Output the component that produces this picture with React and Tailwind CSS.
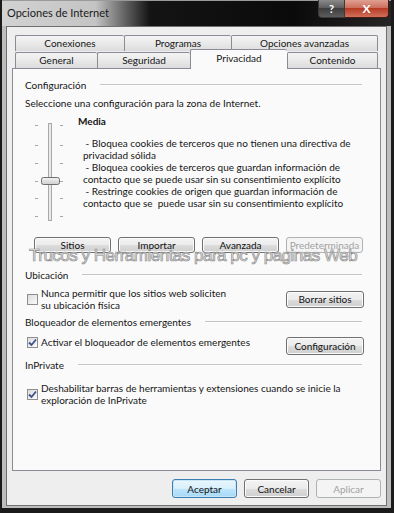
import React from 'react';

const Btn = ({ children, disabled, primary, className = '' }) => {
  let look =
    'border-[#707070] bg-[linear-gradient(#f3f3f3,#ebebeb_50%,#dddddd_50%,#cfcfcf)] text-[#111] shadow-[inset_0_0_0_1px_#fbfbfb]';
  if (primary)
    look =
      'border-[#3c7fb1] bg-[linear-gradient(#eaf6fd,#d9f0fc_50%,#bee6fd_50%,#a7d9f5)] text-[#111] shadow-[inset_0_0_0_1px_#c9e6f8]';
  if (disabled) look = 'border-[#adb2b5] bg-[#f4f4f4] text-[#a2a2a2]';
  return (
    <div className={`flex items-center justify-center rounded-[3px] border leading-none ${look} ${className}`}>
      {children}
    </div>
  );
};

const Check = ({ checked }) => (
  <div className="w-[11px] h-[11px] shrink-0 border border-[#8e8f8f] bg-[linear-gradient(135deg,#dcdcdc,#fbfbfb)] flex items-center justify-center">
    {checked && (
      <svg width="9" height="9" viewBox="0 0 9 9">
        <path d="M1 4.5 L3.5 7 L8 1.5" fill="none" stroke="#3d4f8c" strokeWidth="1.8" />
      </svg>
    )}
  </div>
);

const Group = ({ title, className = '' }) => (
  <div className={`flex items-center gap-[14px] pr-[2px] leading-[12px] ${className}`}>
    <span>{title}</span>
    <div className="flex-1 border-t border-b border-t-[#c4c4c4] border-b-white" />
  </div>
);

const Tab = ({ label, w, last, selected }) => (
  <div
    className={`flex items-center justify-center border-l border-t border-[#898c95] rounded-t-[2px] ${last ? 'border-r' : ''} ${
      selected
        ? 'h-[20px] -mb-[1px] relative z-10 bg-[#fafafa] pb-[3px]'
        : 'bg-[linear-gradient(#f4f4f4,#e9e9e9_50%,#dcdcdc)]'
    }`}
    style={{ width: w }}
  >
    {label}
  </div>
);

const Slider = () => {
  const ticks = [10, 30, 48, 66, 83, 101];
  return (
    <svg width="50" height="108" viewBox="0 0 50 108" className="shrink-0">
      {ticks.map((y) => (
        <g key={y} stroke="#a6a6a6" strokeWidth="1">
          <line x1="10" y1={y + 0.5} x2="13" y2={y + 0.5} />
          <line x1="35" y1={y + 0.5} x2="38" y2={y + 0.5} />
        </g>
      ))}
      <rect x="23.5" y="8.5" width="3" height="97" fill="#e8eaea" stroke="#a9a9a9" />
      <defs>
        <linearGradient id="thumb" x1="0" y1="0" x2="0" y2="1">
          <stop offset="0" stopColor="#f4f4f4" />
          <stop offset="1" stopColor="#cdcdcd" />
        </linearGradient>
      </defs>
      <rect x="16.5" y="62.5" width="18" height="7" rx="2" fill="url(#thumb)" stroke="#6e6e6e" />
    </svg>
  );
};

export default function App() {
  return (
    <div className="relative w-[394px] h-[513px] flex flex-col bg-[#bdbdbd] border-l-2 border-r-[3px] border-b-[5px] border-[#1b1b1b] font-['Lato','Liberation_Sans',sans-serif] text-[10px] text-[#151515] overflow-hidden">
      {/* title bar */}
      <div className="h-[26px] shrink-0 flex items-start justify-between bg-[linear-gradient(90deg,#d2d2d2_0%,#c4c4c4_24%,#6a6a6a_31%,#141414_38%,#0a0a0a_75%,#262626_100%)] shadow-[inset_0_1px_0_#9a9a9a]">
        <span className="pl-[5px] pt-[6px] text-[11px] leading-[14px] text-[#1a1a1a]">Opciones de Internet</span>
        <div className="flex mr-[2px]">
          <div className="w-[27px] h-[18px] flex items-center justify-center rounded-bl-[4px] border border-t-0 border-[#3a3a3a] bg-[linear-gradient(#8a8a8a,#5a5a5a_50%,#3e3e3e_50%,#5c5c5c)] text-white text-[11px] font-bold leading-none">
            ?
          </div>
          <div className="w-[44px] h-[18px] flex items-center justify-center rounded-br-[4px] border border-t-0 border-l-0 border-[#4a1a14] bg-[linear-gradient(#e0a093,#cc6a58_50%,#b83b24_50%,#d0705a)] text-white text-[12px] font-bold leading-none">
            X
          </div>
        </div>
      </div>

      {/* body */}
      <div className="flex-1 flex flex-col mx-[4px] mb-[2px] border border-[#6f6f6f] bg-[#eeeeee] px-[5px] pt-[8px] pb-[7px]">
        {/* tabs */}
        <div className="ml-[3px] flex flex-col">
          <div className="flex h-[16px]">
            <Tab label="Conexiones" w={109} />
            <Tab label="Programas" w={107} />
            <Tab label="Opciones avanzadas" w={147} last />
          </div>
          <div className="flex items-end h-[17px]">
            <Tab label="General" w={82} />
            <Tab label="Seguridad" w={93} />
            <Tab label="Privacidad" w={97} selected />
            <Tab label="Contenido" w={91} last />
          </div>
        </div>

        {/* panel */}
        <div className="flex-1 flex flex-col border border-[#898c95] bg-[#fafafa] pl-[12px] pr-[16px] pt-[10px]">
          <Group title="Configuración" />
          <div className="mt-[6px] leading-[12px]">Seleccione una configuración para la zona de Internet.</div>

          <div className="mt-[6px] flex">
            <Slider />
            <div className="pl-[3px] leading-[12px] whitespace-nowrap">
              <div className="font-bold">Media</div>
              <div className="mt-[10px] pl-[5px]">
                &nbsp;- Bloquea cookies de terceros que no tienen una directiva de
                <br />
                privacidad sólida
                <br />
                &nbsp;- Bloquea cookies de terceros que guardan información de
                <br />
                contacto que se puede usar sin su consentimiento explícito
                <br />
                &nbsp;- Restringe cookies de origen que guardan información de
                <br />
                contacto que se &nbsp;puede usar sin su consentimiento explícito
              </div>
            </div>
          </div>

          <div className="mt-[14px] ml-[9px] flex gap-[7px]">
            <Btn className="w-[77px] h-[16px]">Sitios</Btn>
            <Btn className="w-[77px] h-[16px]">Importar</Btn>
            <Btn className="w-[77px] h-[16px]">Avanzada</Btn>
            <Btn className="w-[77px] h-[16px]" disabled>
              Predeterminada
            </Btn>
          </div>

          <Group title="Ubicación" className="mt-[16px]" />
          <div className="mt-[6px] flex items-center justify-between">
            <div className="flex items-center gap-[3px] ml-[2px] leading-[12px] whitespace-nowrap">
              <Check />
              <div>
                Nunca permitir que los sitios web soliciten
                <br />
                su ubicación física
              </div>
            </div>
            <Btn className="w-[78px] h-[17px]">Borrar sitios</Btn>
          </div>

          <Group title="Bloqueador de elementos emergentes" className="mt-[5px]" />
          <div className="mt-[8px] flex items-start justify-between">
            <div className="flex items-center gap-[3px] ml-[2px] leading-[12px] whitespace-nowrap">
              <Check checked />
              <div>Activar el bloqueador de elementos emergentes</div>
            </div>
            <Btn className="w-[78px] h-[18px] mt-[1px]">Configuración</Btn>
          </div>

          <Group title="InPrivate" className="mt-[4px]" />
          <div className="mt-[11px] flex items-center gap-[3px] ml-[2px] leading-[12px] whitespace-nowrap">
            <Check checked />
            <div>
              Deshabilitar barras de herramientas y extensiones cuando se inicie la
              <br />
              exploración de InPrivate
            </div>
          </div>
        </div>

        {/* footer */}
        <div className="mt-[8px] flex justify-end gap-[7px]">
          <Btn className="w-[65px] h-[19px]" primary>
            Aceptar
          </Btn>
          <Btn className="w-[65px] h-[19px]">Cancelar</Btn>
          <Btn className="w-[65px] h-[19px]" disabled>
            Aplicar
          </Btn>
        </div>
      </div>

      {/* watermark */}
      <div className="absolute left-[27px] top-[245px] text-[17px] tracking-[-0.5px] leading-[22px] font-['Liberation_Sans',sans-serif] text-[#ededed] [-webkit-text-stroke:0.7px_#8c8c8c] whitespace-nowrap pointer-events-none">
        Trucos y Herramientas para pc y paginas Web
      </div>
    </div>
  );
}
